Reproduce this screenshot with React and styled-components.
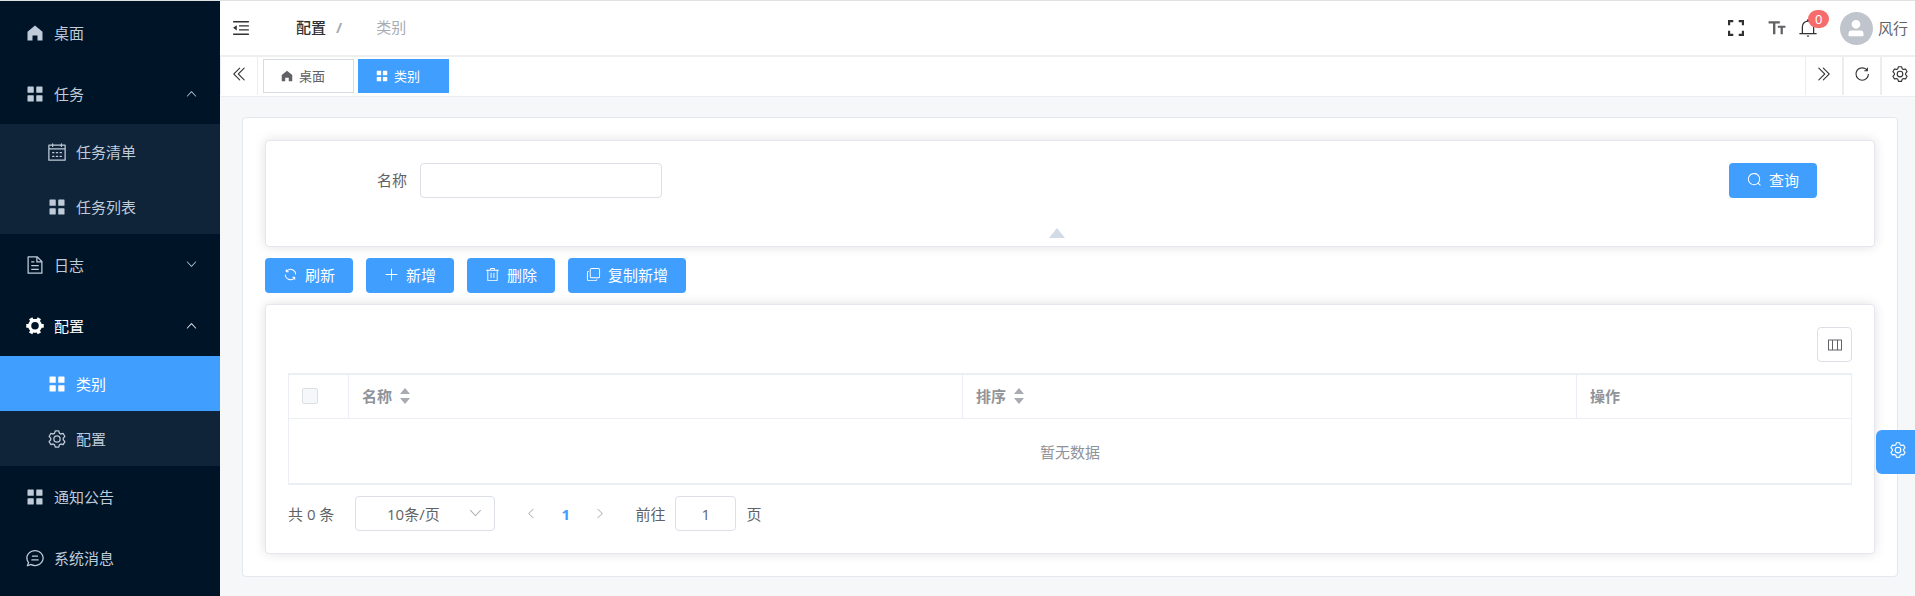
import { useState } from "react";
import styled, { createGlobalStyle } from "styled-components";

const GlobalStyle = createGlobalStyle`
  * {
    box-sizing: border-box;
  }
  body {
    margin: 0;
    background-color: #f5f7f9;
    color: #606266;
    font-family: "Open Sans", "Noto Sans CJK SC", sans-serif;
    font-size: 15px;
    line-height: 20px;
  }
  button, input, select {
    font: inherit;
    color: inherit;
    margin: 0;
  }
  button {
    padding: 0;
    border: none;
    background: none;
    cursor: pointer;
  }
  a {
    color: inherit;
    text-decoration: none;
  }
`;

// icon shapes on a 1024 grid
const ICONS = {
  home: "M512 128 128 447.936V896h255.936V640H640v256h255.936V447.936z",
  menu: "M160 448a32 32 0 0 1-32-32V160a32 32 0 0 1 32-32h256a32 32 0 0 1 32 32v256a32 32 0 0 1-32 32zm448 0a32 32 0 0 1-32-32V160a32 32 0 0 1 32-32h256a32 32 0 0 1 32 32v256a32 32 0 0 1-32 32zM160 896a32 32 0 0 1-32-32V608a32 32 0 0 1 32-32h256a32 32 0 0 1 32 32v256a32 32 0 0 1-32 32zm448 0a32 32 0 0 1-32-32V608a32 32 0 0 1 32-32h256a32 32 0 0 1 32 32v256a32 32 0 0 1-32 32z",
  calendar:
    "M128 384v512h768V192H768v32a32 32 0 1 1-64 0v-32H320v32a32 32 0 0 1-64 0v-32H128v128h768v64zm192-256h384V96a32 32 0 1 1 64 0v32h160a32 32 0 0 1 32 32v768a32 32 0 0 1-32 32H96a32 32 0 0 1-32-32V160a32 32 0 0 1 32-32h160V96a32 32 0 0 1 64 0zm-32 384h64a32 32 0 0 1 0 64h-64a32 32 0 0 1 0-64m0 192h64a32 32 0 1 1 0 64h-64a32 32 0 1 1 0-64m192-192h64a32 32 0 0 1 0 64h-64a32 32 0 0 1 0-64m0 192h64a32 32 0 1 1 0 64h-64a32 32 0 1 1 0-64m192-192h64a32 32 0 1 1 0 64h-64a32 32 0 1 1 0-64m0 192h64a32 32 0 1 1 0 64h-64a32 32 0 1 1 0-64",
  document:
    "M832 384H576V128H192v768h640zm-26.496-64L640 154.496V320zM160 64h480l256 256v608a32 32 0 0 1-32 32H160a32 32 0 0 1-32-32V96a32 32 0 0 1 32-32m160 448h384v64H320zm0-192h160v64H320zm0 384h384v64H320z",
  tools:
    "M764.416 254.72a351.68 351.68 0 0 1 86.336 149.184H960v192.064H850.752a351.68 351.68 0 0 1-86.336 149.312l54.72 94.72-166.272 96-54.592-94.72a352.64 352.64 0 0 1-172.48 0L371.136 936l-166.272-96 54.72-94.72a351.68 351.68 0 0 1-86.336-149.312H64v-192h109.248a351.68 351.68 0 0 1 86.336-149.312L204.8 160l166.208-96h.192l54.656 94.592a352.64 352.64 0 0 1 172.48 0L652.8 64h.128L819.2 160l-54.72 94.72zM704 499.968a192 192 0 1 0-384 0 192 192 0 0 0 384 0",
  setting:
    "M600.704 64a32 32 0 0 1 30.464 22.208l35.2 109.376c14.784 7.232 28.928 15.36 42.432 24.512l112.384-24.192a32 32 0 0 1 34.432 15.36L944.32 364.8a32 32 0 0 1-4.032 37.504l-77.12 85.12a357.12 357.12 0 0 1 0 49.024l77.12 85.248a32 32 0 0 1 4.032 37.504l-88.704 153.6a32 32 0 0 1-34.432 15.296L708.8 803.904c-13.44 9.088-27.648 17.28-42.368 24.512l-35.264 109.376A32 32 0 0 1 600.704 960H423.296a32 32 0 0 1-30.464-22.208L357.696 828.48a351.616 351.616 0 0 1-42.56-24.64l-112.32 24.256a32 32 0 0 1-34.432-15.36L79.68 659.2a32 32 0 0 1 4.032-37.504l77.12-85.248a357.12 357.12 0 0 1 0-48.896l-77.12-85.248A32 32 0 0 1 79.68 364.8l88.704-153.6a32 32 0 0 1 34.432-15.296l112.32 24.256c13.568-9.152 27.776-17.408 42.56-24.64l35.2-109.312A32 32 0 0 1 423.232 64H600.64zm-23.424 64H446.72l-36.352 113.088-24.512 11.968a294.113 294.113 0 0 0-34.816 20.096l-22.656 15.36-116.224-25.088-65.28 113.152 79.68 88.192-1.92 27.136a293.12 293.12 0 0 0 0 40.192l1.92 27.136-79.808 88.192 65.344 113.152 116.224-25.024 22.656 15.296a294.113 294.113 0 0 0 34.816 20.096l24.512 11.968L446.72 896h130.688l36.48-113.152 24.448-11.904a288.282 288.282 0 0 0 34.752-20.096l22.592-15.296 116.288 25.024 65.28-113.152-79.744-88.192 1.92-27.136a293.12 293.12 0 0 0 0-40.256l-1.92-27.136 79.808-88.128-65.344-113.152-116.288 24.96-22.592-15.232a287.616 287.616 0 0 0-34.752-20.096l-24.448-11.904L577.344 128zM512 320a192 192 0 1 1 0 384 192 192 0 0 1 0-384m0 64a128 128 0 1 0 0 256 128 128 0 0 0 0-256",
  chat: "m174.72 855.68 135.296-45.12 23.68 11.84C388.096 849.536 448.576 864 512 864c211.84 0 384-166.784 384-352S723.84 160 512 160 128 326.784 128 512c0 69.12 24.96 139.264 70.848 199.232l22.08 28.8-46.272 115.584zm-45.248 82.56A32 32 0 0 1 89.6 896l58.368-145.92C94.72 680.32 64 596.864 64 512 64 299.904 256 96 512 96s448 203.904 448 416-192 416-448 416a461.056 461.056 0 0 1-206.912-48.384l-175.616 58.56zM352 576h320q32 0 32 32t-32 32H352q-32 0-32-32t32-32m32-192h256q32 0 32 32t-32 32H384q-32 0-32-32t32-32",
  arrowUp:
    "m488.832 344.32-339.84 356.672a32 32 0 0 0 0 44.16l.384.384a29.44 29.44 0 0 0 42.688 0l320-335.872 319.872 335.872a29.44 29.44 0 0 0 42.688 0l.384-.384a32 32 0 0 0 0-44.16L535.168 344.32a32 32 0 0 0-46.336 0",
  doubleLeft:
    "M529.408 149.376a29.12 29.12 0 0 1 41.728 0 30.592 30.592 0 0 1 0 42.688L259.264 511.936l311.872 319.936a30.592 30.592 0 0 1-.512 43.264 29.12 29.12 0 0 1-41.216-.512L197.76 534.272a32 32 0 0 1 0-44.672zm256 0a29.12 29.12 0 0 1 41.728 0 30.592 30.592 0 0 1 0 42.688L515.264 511.936l311.872 319.936a30.592 30.592 0 0 1-.512 43.264 29.12 29.12 0 0 1-41.216-.512L453.76 534.272a32 32 0 0 1 0-44.672z",
  reload:
    "M784.512 230.272v-50.56a32 32 0 1 1 64 0v149.056a32 32 0 0 1-32 32H667.52a32 32 0 1 1 0-64h92.992A320 320 0 1 0 524.8 833.152a320 320 0 0 0 320-320h64a384 384 0 0 1-384 384 384 384 0 0 1-384-384 384 384 0 0 1 643.712-282.88z",
  refresh:
    "M771.776 794.88A384 384 0 0 1 128 512h64a320 320 0 0 0 555.712 216.448H654.72a32 32 0 1 1 0-64h149.056a32 32 0 0 1 32 32v148.928a32 32 0 1 1-64 0v-50.56zM276.288 295.616h92.992a32 32 0 0 1 0 64H220.16a32 32 0 0 1-32-32V178.56a32 32 0 0 1 64 0v50.56A384 384 0 0 1 896.128 512h-64a320 320 0 0 0-555.776-216.384z",
  plus: "M480 480V128a32 32 0 0 1 64 0v352h352a32 32 0 1 1 0 64H544v352a32 32 0 1 1-64 0V544H128a32 32 0 0 1 0-64z",
  trash:
    "M160 256H96a32 32 0 0 1 0-64h256V95.936a32 32 0 0 1 32-32h256a32 32 0 0 1 32 32V192h256a32 32 0 1 1 0 64h-64v672a32 32 0 0 1-32 32H192a32 32 0 0 1-32-32zm448-64v-64H416v64zM224 896h576V256H224zm192-128a32 32 0 0 1-32-32V416a32 32 0 0 1 64 0v320a32 32 0 0 1-32 32m192 0a32 32 0 0 1-32-32V416a32 32 0 0 1 64 0v320a32 32 0 0 1-32 32",
  copy: "M768 832a128 128 0 0 1-128 128H192A128 128 0 0 1 64 832V384a128 128 0 0 1 128-128v64a64 64 0 0 0-64 64v448a64 64 0 0 0 64 64h448a64 64 0 0 0 64-64zM384 128a64 64 0 0 0-64 64v448a64 64 0 0 0 64 64h448a64 64 0 0 0 64-64V192a64 64 0 0 0-64-64zm0-64h448a128 128 0 0 1 128 128v448a128 128 0 0 1-128 128H384a128 128 0 0 1-128-128V192A128 128 0 0 1 384 64",
  search:
    "m795.904 750.72 124.992 124.928a32 32 0 0 1-45.248 45.248L750.656 795.904a416 416 0 1 1 45.248-45.248zM480 832a352 352 0 1 0 0-704 352 352 0 0 0 0 704",
  bell: "M512 64a64 64 0 0 1 64 64v64H448v-64a64 64 0 0 1 64-64M256 768h512V448a256 256 0 1 0-512 0zm256-640a320 320 0 0 1 320 320v384H192V448a320 320 0 0 1 320-320M96 768h832q32 0 32 32t-32 32H96q-32 0-32-32t32-32m352 128h128a64 64 0 0 1-128 0",
  user: "M288 320a224 224 0 1 0 448 0 224 224 0 1 0-448 0m544 608H160a32 32 0 0 1-32-32v-96a160 160 0 0 1 160-160h448a160 160 0 0 1 160 160v96a32 32 0 0 1-32 32z",
  fold: "M64 112h896v88H64zM400 352h560v80H400zM400 576h560v80H400zM64 824h896v88H64zM64 504l208-152v304z",
  fullscreen:
    "M102 102h270v112H214v158H102zM652 102h270v270H810V214H652zM102 652h112v158h158v112H102zM810 652h112v270H652V810h158z",
  textSize: "M32 128h640v128H420v608H284V256H32zM560 384h432v120H844v360H716V504H560z",
  columns:
    "M96 160h832a32 32 0 0 1 32 32v640a32 32 0 0 1-32 32H96a32 32 0 0 1-32-32V192a32 32 0 0 1 32-32m32 64v576h192V224zm256 0v576h256V224zm320 0v576h192V224z",
};

const Svg = styled.svg`
  display: block;
  flex: none;
  width: ${(p) => p.$size}px;
  height: ${(p) => p.$size}px;
  fill: currentColor;
  transform: rotate(${(p) => p.$turn || 0}deg);
`;

const Icon = ({ name, size = 15, turn }) => (
  <Svg viewBox="0 0 1024 1024" $size={size} $turn={turn} aria-hidden="true">
    <path d={ICONS[name]} />
  </Svg>
);

const Page = styled.div`
  display: flex;
  min-height: 100vh;
`;

// ---------- sidebar ----------
const Sidebar = styled.nav`
  flex: none;
  width: 220px;
  padding-top: 2px;
  background-color: #001428;
  box-shadow: inset 0 1px 0 #dfe2e2;
`;
const MenuList = styled.ul`
  list-style: none;
  margin: 0;
  padding: 0;
  background-color: ${(p) => (p.$sub ? "#0f2438" : "transparent")};
`;
const MenuLink = styled.a`
  display: flex;
  align-items: center;
  gap: 6px;
  height: ${(p) => (p.$sub ? 55 : 61)}px;
  padding: 0 22px 0 ${(p) => (p.$sub ? 44 : 22)}px;
  color: ${(p) => (p.$bright ? "#fff" : "#bfcbd9")};
  background-color: ${(p) => (p.$active ? "#409eff" : "transparent")};
`;
const MenuIcon = styled.span`
  display: flex;
  justify-content: center;
  width: 26px;
`;
const MenuText = styled.span`
  flex: 1;
`;

// ---------- header ----------
const Main = styled.div`
  flex: 1;
  min-width: 0;
`;
const Header = styled.header`
  display: flex;
  align-items: center;
  height: 57px;
  padding: 0 7px 0 12px;
  background-color: #fff;
  border-top: 1px solid #dfe2e2;
  border-bottom: 2px solid #eee;
`;
const IconButton = styled.button`
  display: flex;
  align-items: center;
  color: ${(p) => p.$color || "#303133"};
`;
const Breadcrumb = styled.nav`
  display: flex;
  flex: 1;
  gap: 10px;
  margin-left: 46px;
  padding-bottom: 2px;
`;
const Crumb = styled.a`
  color: #303133;
  font-weight: 500;
`;
const CrumbSeparator = styled.span`
  color: #a8abb2;
  font-weight: 700;
`;
const CrumbCurrent = styled.span`
  margin-left: 24px;
  color: #a8abb2;
`;
const HeaderTools = styled.div`
  display: flex;
  align-items: center;
  gap: 22px;
`;
const BellWrap = styled.div`
  position: relative;
  margin-left: -10px;
`;
const Badge = styled.span`
  position: absolute;
  top: -8px;
  left: 10px;
  height: 18px;
  padding: 0 7px;
  border-radius: 9px;
  background-color: #f56c6c;
  color: #fff;
  font-size: 13px;
  line-height: 18px;
`;
const User = styled.a`
  display: flex;
  align-items: center;
  gap: 5px;
`;
const Avatar = styled.span`
  display: flex;
  align-items: center;
  justify-content: center;
  width: 33px;
  height: 33px;
  border-radius: 50%;
  background-color: #c0c4cc;
  color: #fff;
`;

// ---------- tabs ----------
const TabsBar = styled.div`
  display: flex;
  height: 40px;
  background-color: #fff;
  border-bottom: 1px solid #ebeef0;
`;
const TabsControl = styled.button`
  display: flex;
  flex: none;
  align-items: center;
  justify-content: center;
  width: 38px;
  height: 38px;
  padding-bottom: 4px;
  border-left: 1px solid #ebeef0;
  border-right: 1px solid #ebeef0;
  color: #303133;
`;
const TabsRight = styled.div`
  display: flex;
  width: 110px;
  overflow: hidden;
`;
const TabList = styled.div`
  display: flex;
  flex: 1;
  gap: 4px;
  padding: 2px 5px;
`;
const Tab = styled.a`
  display: flex;
  align-items: center;
  gap: 5px;
  width: 91px;
  height: 34px;
  padding-left: 16px;
  border: 1px solid ${(p) => (p.$active ? "#409eff" : "#d8dce5")};
  background-color: ${(p) => (p.$active ? "#409eff" : "#fff")};
  color: ${(p) => (p.$active ? "#fff" : "#606266")};
  font-size: 13px;
`;

// ---------- content ----------
const Content = styled.main`
  padding: 20px 17px 19px 22px;
`;
const Panel = styled.section`
  padding: 22px;
  border: 1px solid #e4e7ed;
  border-radius: 4px;
  background-color: #fff;
`;
const Card = styled.div`
  padding: 22px 22px ${(p) => p.$bottom || 22}px;
  border: 1px solid #e4e7ed;
  border-radius: 4px;
  background-color: #fff;
  box-shadow: 0 0 12px rgba(0, 0, 0, 0.12);
`;
const SearchForm = styled.form`
  display: grid;
  grid-template-columns: repeat(4, 1fr);
`;
const Field = styled.div`
  display: flex;
  align-items: center;
  padding-right: 17px;
`;
const FieldLabel = styled.label`
  width: 132px;
  padding: 0 13px 2px 0;
  text-align: right;
`;
const TextInput = styled.input`
  flex: 1;
  min-width: 0;
  height: 35px;
  padding: 0 12px;
  border: 1px solid #dcdfe6;
  border-radius: 4px;
  outline: none;
`;
const FormActions = styled.div`
  display: flex;
  grid-column: 4;
  justify-content: flex-end;
  padding-right: 35px;
`;
const Button = styled.button`
  display: flex;
  align-items: center;
  gap: 7px;
  height: 35px;
  padding: 0 18px 2px;
  border-radius: 4px;
  background-color: #409eff;
  color: #fff;
`;
const FoldRow = styled.div`
  display: flex;
  justify-content: center;
  margin-top: 30px;
  padding-right: 26px;
`;
const FoldToggle = styled.button`
  border: 8px solid transparent;
  border-top: none;
  border-bottom: 10px solid #d3dce6;
`;
const Actions = styled.div`
  display: flex;
  gap: 13px;
  margin: 11px 0;
`;
const TableTools = styled.div`
  display: flex;
  justify-content: flex-end;
  margin-bottom: 11px;
`;
const SquareButton = styled.button`
  display: flex;
  align-items: center;
  justify-content: center;
  width: 35px;
  height: 35px;
  border: 1px solid #dcdfe6;
  border-radius: 4px;
`;
const Table = styled.table`
  width: 100%;
  table-layout: fixed;
  border: 1px solid #ebeef5;
  border-width: 2px 1px;
  border-spacing: 0;
  color: #909399;
`;
const Th = styled.th`
  width: ${(p) => p.$width || "auto"};
  height: 44px;
  padding: 0 13px 2px;
  border-bottom: 1px solid #ebeef5;
  text-align: left;
  &:not(:last-child) {
    border-right: 1px solid #ebeef5;
  }
`;
const HeadCell = styled.div`
  display: flex;
  align-items: center;
  gap: 8px;
`;
const EmptyCell = styled.td`
  height: 64px;
  padding: 2px 0 0;
  text-align: center;
`;
const Checkbox = styled.input`
  display: block;
  appearance: none;
  width: 16px;
  height: 16px;
  border: 1px solid #dcdfe6;
  border-radius: 2px;
  background-color: #f5f7fa;
`;
const SortSvg = styled.svg`
  display: block;
  width: 10px;
  height: 16px;
  fill: #a8abb2;
`;
const Pagination = styled.div`
  display: flex;
  align-items: center;
  margin-top: 11px;
`;
const SelectWrap = styled.div`
  display: grid;
  align-items: center;
  width: 140px;
  margin: 0 18px 0 21px;
  & > * {
    grid-area: 1 / 1;
  }
  & > svg {
    justify-self: end;
    margin-right: 12px;
    color: #a8abb2;
    pointer-events: none;
  }
`;
const Select = styled.select`
  appearance: none;
  width: 100%;
  height: 35px;
  padding: 0 36px 0 12px;
  border: 1px solid #dcdfe6;
  border-radius: 4px;
  background-color: #fff;
  text-align-last: center;
`;
const PageButton = styled.button`
  display: flex;
  align-items: center;
  justify-content: center;
  width: 35px;
  height: 35px;
  color: ${(p) => (p.$current ? "#409eff" : "#a8abb2")};
  font-weight: 700;
`;
const JumpLabel = styled.label`
  display: flex;
  align-items: center;
  gap: 10px;
  margin-left: 17px;
`;
const JumpInput = styled(TextInput)`
  flex: none;
  width: 61px;
  text-align: center;
`;
const SettingsHandle = styled.button`
  position: fixed;
  right: 0;
  bottom: 122px;
  display: flex;
  align-items: center;
  justify-content: center;
  width: 39px;
  height: 44px;
  padding: 0 0 4px 4px;
  border-radius: 6px 0 0 6px;
  background-color: #409eff;
  color: #fff;
`;

const menus = [
  { title: "桌面", icon: "home" },
  {
    title: "任务",
    icon: "menu",
    open: true,
    children: [
      { title: "任务清单", icon: "calendar" },
      { title: "任务列表", icon: "menu" },
    ],
  },
  { title: "日志", icon: "document", children: [] },
  {
    title: "配置",
    icon: "tools",
    open: true,
    bright: true,
    children: [
      { title: "类别", icon: "menu", active: true },
      { title: "配置", icon: "setting" },
    ],
  },
  { title: "通知公告", icon: "menu" },
  { title: "系统消息", icon: "chat" },
];

const actions = [
  { title: "刷新", icon: "refresh" },
  { title: "新增", icon: "plus" },
  { title: "删除", icon: "trash" },
  { title: "复制新增", icon: "copy" },
];

const MenuItem = ({ item, sub }) => (
  <li>
    <MenuLink
      href="#"
      $sub={sub}
      $active={item.active}
      $bright={item.active || item.bright}
    >
      <MenuIcon>
        <Icon name={item.icon} size={20} />
      </MenuIcon>
      <MenuText>{item.title}</MenuText>
      {item.children && (
        <Icon name="arrowUp" size={13} turn={item.open ? 0 : 180} />
      )}
    </MenuLink>
    {item.open && (
      <MenuList $sub>
        {item.children.map((child) => (
          <MenuItem key={child.title} item={child} sub />
        ))}
      </MenuList>
    )}
  </li>
);

const SortCarets = () => (
  <SortSvg viewBox="0 0 10 16" aria-hidden="true">
    <path d="M5 0l5 6H0zM0 10h10l-5 6z" />
  </SortSvg>
);

function App() {
  const [name, setName] = useState("");
  const [pageSize, setPageSize] = useState("10");
  const [jump, setJump] = useState("1");

  return (
    <>
      <GlobalStyle />
      <Page>
        <Sidebar>
          <MenuList>
            {menus.map((item) => (
              <MenuItem key={item.title} item={item} />
            ))}
          </MenuList>
        </Sidebar>

        <Main>
          <Header>
            <IconButton aria-label="折叠菜单">
              <Icon name="fold" size={18} />
            </IconButton>
            <Breadcrumb>
              <Crumb href="#">配置</Crumb>
              <CrumbSeparator>/</CrumbSeparator>
              <CrumbCurrent>类别</CrumbCurrent>
            </Breadcrumb>
            <HeaderTools>
              <IconButton aria-label="全屏">
                <Icon name="fullscreen" size={20} />
              </IconButton>
              <IconButton aria-label="字号" $color="#606266">
                <Icon name="textSize" size={18} />
              </IconButton>
              <BellWrap>
                <IconButton aria-label="消息">
                  <Icon name="bell" size={20} />
                </IconButton>
                <Badge>0</Badge>
              </BellWrap>
              <User href="#">
                <Avatar>
                  <Icon name="user" size={20} />
                </Avatar>
                风行
              </User>
            </HeaderTools>
          </Header>

          <TabsBar>
            <TabsControl aria-label="向左">
              <Icon name="doubleLeft" size={18} />
            </TabsControl>
            <TabList>
              <Tab href="#">
                <Icon name="home" size={14} />
                桌面
              </Tab>
              <Tab href="#" $active>
                <Icon name="menu" size={14} />
                类别
              </Tab>
            </TabList>
            <TabsRight>
              <TabsControl aria-label="向右">
                <Icon name="doubleLeft" size={18} turn={180} />
              </TabsControl>
              <TabsControl aria-label="重新加载">
                <Icon name="reload" size={18} />
              </TabsControl>
              <TabsControl aria-label="标签设置">
                <Icon name="setting" size={18} />
              </TabsControl>
            </TabsRight>
          </TabsBar>

          <Content>
            <Panel>
              <Card $bottom={8}>
                <SearchForm onSubmit={(e) => e.preventDefault()}>
                  <Field>
                    <FieldLabel htmlFor="name">名称</FieldLabel>
                    <TextInput
                      id="name"
                      value={name}
                      onChange={(e) => setName(e.target.value)}
                    />
                  </Field>
                  <FormActions>
                    <Button type="submit">
                      <Icon name="search" />
                      查询
                    </Button>
                  </FormActions>
                </SearchForm>
                <FoldRow>
                  <FoldToggle aria-label="收起" />
                </FoldRow>
              </Card>

              <Actions>
                {actions.map((action) => (
                  <Button key={action.title}>
                    <Icon name={action.icon} />
                    {action.title}
                  </Button>
                ))}
              </Actions>

              <Card>
                <TableTools>
                  <SquareButton aria-label="列设置">
                    <Icon name="columns" size={16} />
                  </SquareButton>
                </TableTools>
                <Table>
                  <thead>
                    <tr>
                      <Th $width="60px">
                        <Checkbox type="checkbox" aria-label="全选" disabled />
                      </Th>
                      <Th>
                        <HeadCell>
                          名称
                          <SortCarets />
                        </HeadCell>
                      </Th>
                      <Th>
                        <HeadCell>
                          排序
                          <SortCarets />
                        </HeadCell>
                      </Th>
                      <Th $width="274px">操作</Th>
                    </tr>
                  </thead>
                  <tbody>
                    <tr>
                      <EmptyCell colSpan={4}>暂无数据</EmptyCell>
                    </tr>
                  </tbody>
                </Table>

                <Pagination>
                  <span>共 0 条</span>
                  <SelectWrap>
                    <Select
                      aria-label="每页条数"
                      value={pageSize}
                      onChange={(e) => setPageSize(e.target.value)}
                    >
                      <option value="10">10条/页</option>
                      <option value="20">20条/页</option>
                      <option value="50">50条/页</option>
                    </Select>
                    <Icon name="arrowUp" turn={180} />
                  </SelectWrap>
                  <PageButton aria-label="上一页" disabled>
                    <Icon name="arrowUp" size={13} turn={-90} />
                  </PageButton>
                  <PageButton $current>1</PageButton>
                  <PageButton aria-label="下一页" disabled>
                    <Icon name="arrowUp" size={13} turn={90} />
                  </PageButton>
                  <JumpLabel>
                    前往
                    <JumpInput
                      value={jump}
                      onChange={(e) => setJump(e.target.value)}
                    />
                    页
                  </JumpLabel>
                </Pagination>
              </Card>
            </Panel>
          </Content>
        </Main>

        <SettingsHandle aria-label="系统设置">
          <Icon name="setting" size={18} />
        </SettingsHandle>
      </Page>
    </>
  );
}

export default App;
